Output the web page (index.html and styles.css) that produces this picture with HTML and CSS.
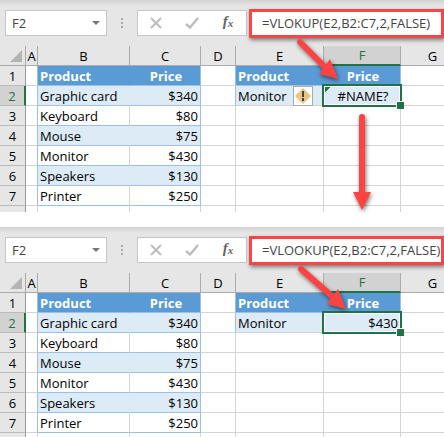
FILE: index.html
```
<!DOCTYPE html>
<html lang="en">
<head>
    <meta charset="UTF-8">
    <title>VLOOKUP #NAME? error</title>
    <link rel="stylesheet" href="styles.css">
</head>
<body>
<!--formula with the wrong name-->
<div class="sheet">
    <div class="toolbar">
        <div class="name_box">
            <input type="text" value="F2" aria-label="Name box">
            <button type="button" aria-label="Open name list"><svg width="8" height="4"><path d="M0 0h8L4 4z" fill="#777"/></svg></button>
        </div>
        <div class="dots"><i></i><i></i><i></i></div>
        <div class="tools">
            <button type="button" aria-label="Cancel"><svg width="12" height="12"><path d="M1 1l10 10M11 1L1 11" stroke="#bdbdbd" stroke-width="2"/></svg></button>
            <button type="button" aria-label="Enter"><svg width="14" height="12"><path d="M1 7l4 3.5L13 1" fill="none" stroke="#bdbdbd" stroke-width="2.4"/></svg></button>
            <button type="button" class="fx" aria-label="Insert function">f<small>x</small></button>
        </div>
        <input type="text" class="formula" value="=VLOKUP(E2,B2:C7,2,FALSE)" aria-label="Formula">
    </div>
    <table class="grid">
        <colgroup>
            <col class="c_num"><col class="c_a"><col class="c_b"><col class="c_c"><col class="c_d"><col class="c_e"><col class="c_f"><col>
        </colgroup>
        <thead>
        <tr><th class="corner"><svg width="12" height="12"><path d="M12 0v12H0z" fill="#b4b4b4"/></svg></th><th>A</th><th>B</th><th>C</th><th>D</th><th>E</th><th class="on">F</th><th>G</th></tr>
        </thead>
        <tbody>
        <tr><th>1</th><td class="edge"></td><td class="head">Product</td><td class="head mid edge">Price</td><td class="edge"></td><td class="head">Product</td><td class="head mid edge">Price</td><td></td></tr>
        <tr><th class="on">2</th><td class="edge"></td><td class="item fill">Graphic card</td><td class="item fill num edge">$340</td><td class="edge"></td><td class="fill">Monitor<button type="button" class="warn" aria-label="Error options"><svg width="16" height="16"><path d="M8 0l8 8-8 8-8-8z" fill="#edc583"/><path d="M8 3v6M8 10v3" stroke="#444" stroke-width="2"/></svg></button></td><td class="fill mid active error">#NAME?</td><td></td></tr>
        <tr><th>3</th><td class="edge"></td><td class="item">Keyboard</td><td class="item num edge">$80</td><td></td><td></td><td></td><td></td></tr>
        <tr><th>4</th><td class="edge"></td><td class="item fill">Mouse</td><td class="item fill num edge">$75</td><td></td><td></td><td></td><td></td></tr>
        <tr><th>5</th><td class="edge"></td><td class="item">Monitor</td><td class="item num edge">$430</td><td></td><td></td><td></td><td></td></tr>
        <tr><th>6</th><td class="edge"></td><td class="item fill">Speakers</td><td class="item fill num edge">$130</td><td></td><td></td><td></td><td></td></tr>
        <tr><th>7</th><td class="edge"></td><td class="item">Printer</td><td class="item num edge">$250</td><td></td><td></td><td></td><td></td></tr>
        <tr class="rest"><th></th><td></td><td></td><td></td><td></td><td></td><td></td><td></td></tr>
        </tbody>
    </table>
</div>

<!--corrected formula-->
<div class="sheet">
    <div class="toolbar">
        <div class="name_box">
            <input type="text" value="F2" aria-label="Name box">
            <button type="button" aria-label="Open name list"><svg width="8" height="4"><path d="M0 0h8L4 4z" fill="#777"/></svg></button>
        </div>
        <div class="dots"><i></i><i></i><i></i></div>
        <div class="tools">
            <button type="button" aria-label="Cancel"><svg width="12" height="12"><path d="M1 1l10 10M11 1L1 11" stroke="#bdbdbd" stroke-width="2"/></svg></button>
            <button type="button" aria-label="Enter"><svg width="14" height="12"><path d="M1 7l4 3.5L13 1" fill="none" stroke="#bdbdbd" stroke-width="2.4"/></svg></button>
            <button type="button" class="fx" aria-label="Insert function">f<small>x</small></button>
        </div>
        <input type="text" class="formula" value="=VLOOKUP(E2,B2:C7,2,FALSE)" aria-label="Formula">
    </div>
    <table class="grid">
        <colgroup>
            <col class="c_num"><col class="c_a"><col class="c_b"><col class="c_c"><col class="c_d"><col class="c_e"><col class="c_f"><col>
        </colgroup>
        <thead>
        <tr><th class="corner"><svg width="12" height="12"><path d="M12 0v12H0z" fill="#b4b4b4"/></svg></th><th>A</th><th>B</th><th>C</th><th>D</th><th>E</th><th class="on">F</th><th>G</th></tr>
        </thead>
        <tbody>
        <tr><th>1</th><td class="edge"></td><td class="head">Product</td><td class="head mid edge">Price</td><td class="edge"></td><td class="head">Product</td><td class="head mid edge">Price</td><td></td></tr>
        <tr><th class="on">2</th><td class="edge"></td><td class="item fill">Graphic card</td><td class="item fill num edge">$340</td><td class="edge"></td><td class="fill">Monitor</td><td class="fill num active">$430</td><td></td></tr>
        <tr><th>3</th><td class="edge"></td><td class="item">Keyboard</td><td class="item num edge">$80</td><td></td><td></td><td></td><td></td></tr>
        <tr><th>4</th><td class="edge"></td><td class="item fill">Mouse</td><td class="item fill num edge">$75</td><td></td><td></td><td></td><td></td></tr>
        <tr><th>5</th><td class="edge"></td><td class="item">Monitor</td><td class="item num edge">$430</td><td></td><td></td><td></td><td></td></tr>
        <tr><th>6</th><td class="edge"></td><td class="item fill">Speakers</td><td class="item fill num edge">$130</td><td></td><td></td><td></td><td></td></tr>
        <tr><th>7</th><td class="edge"></td><td class="item">Printer</td><td class="item num edge">$250</td><td></td><td></td><td></td><td></td></tr>
        <tr class="rest"><th></th><td></td><td></td><td></td><td></td><td></td><td></td><td></td></tr>
        </tbody>
    </table>
</div>

<!--arrows over both sheets-->
<svg class="arrows" width="444" height="437">
    <g stroke="#ff4343" stroke-width="6" stroke-linecap="round" fill="#ff4343">
        <path d="M300 42L326 68"/>
        <path d="M362 117V194"/>
        <path d="M301 269L334 298"/>
        <g stroke="none">
            <path d="M338 79L330 59L319 74z"/>
            <path d="M362 210L353 192H371z"/>
            <path d="M346 309L338 289L327 304z"/>
        </g>
    </g>
</svg>
</body>
</html>
```
FILE: styles.css
```
*{
    margin: 0;
    padding: 0;
    box-sizing: border-box;
}
body{
    position: relative;
    background: white;
    color: #000;
    font-family: "Open Sans", "Noto Sans", sans-serif;
    font-size: 13px;
    line-height: 18px;
    overflow: hidden;
}
input,button{
    font: inherit;
    border: 0;
    background: none;
    color: #444;
    min-width: 0;
}
.sheet{
    overflow: hidden;
}
.sheet + .sheet{
    margin-top: 15px;
}

/*formula bar*/
.toolbar{
    display: flex;
    align-items: center;
    height: 46px;
    padding-left: 5px;
    background: linear-gradient(#d2d2d2, #e6e6e6 6px);
}
.name_box,.tools{
    display: flex;
    align-items: center;
    height: 26px;
    border: 1px solid #c6c6c6;
    background: white;
}
.name_box{
    width: 102px;
}
.name_box input{
    flex: 1;
    padding-left: 6px;
}
.name_box button{
    display: flex;
    padding: 6px;
}
.dots{
    display: grid;
    gap: 2px;
    margin: 0 14px;
}
.dots i{
    width: 2px;
    height: 2px;
    background: #aaa;
}
.tools{
    width: 110px;
}
.tools button{
    flex: 1;
    display: flex;
    justify-content: center;
}
.tools .fx{
    font: italic bold 15px/16px "Liberation Serif", serif;
    color: #666;
}
.fx small{
    font-size: 11px;
    line-height: 20px;
}
.formula{
    flex: 1;
    height: 29px;
    margin: 0 0 0 2px;
    padding-left: 10px;
    border: 3px solid #f94545;
    background: white;
    box-shadow: 1px 2px 4px #777;
}

/*cells*/
.grid{
    width: 100%;
    min-width: 465px;
    table-layout: fixed;
    border-spacing: 0;
}
.c_num{
    width: 26px;
}
.c_a{
    width: 12px;
}
.c_b{
    width: 92px;
}
.c_c{
    width: 71px;
}
.c_d{
    width: 35px;
}
.c_e{
    width: 88px;
}
.c_f{
    width: 77px;
}
tr{
    height: 20px;
}
th,td{
    height: 20px;
    line-height: 18px;
    border-right: 1px solid #d4d4d4;
    border-bottom: 1px solid #d4d4d4;
    white-space: nowrap;
}
th{
    font-weight: normal;
    text-align: center;
    background: #e6e6e6;
    border-color: #ababab;
}
tbody th{
    border-right-color: #999;
    border-bottom-color: #bbb;
}
.corner svg{
    display: block;
    margin-left: 10px;
}
th.on{
    background: #d2d2d2;
    color: #217346;
}
thead .on{
    border-bottom: 2px solid #217346;
}
tbody .on{
    border-right: 2px solid #217346;
}
td{
    padding-left: 2px;
}
.edge{
    border-right-color: #9bc2e6;
}
.head{
    background: #5b9bd5;
    color: white;
    font-weight: bold;
    border-bottom-color: #9bc2e6;
}
.head:not(.edge){
    border-right-color: #5b9bd5;
}
.item{
    border-bottom-color: #9bc2e6;
}
.fill{
    position: relative;
    background: #ddebf7;
}
.fill:not(.edge){
    border-right-color: #ddebf7;
}
.mid{
    text-align: center;
}
.num{
    text-align: right;
    padding-right: 2px;
}
/*selection frame and its fill handle*/
.active::before{
    content: "";
    position: absolute;
    inset: -2px;
    border: 2px solid #217346;
    box-shadow: inset 0 0 0 1px white;
}
.active::after{
    content: "";
    position: absolute;
    right: -4px;
    bottom: -4px;
    width: 7px;
    height: 7px;
    border: 1px solid white;
    border-right: 0;
    border-bottom: 0;
    background: #217346;
}
.error{
    background: linear-gradient(135deg, #217346 5px, #ddebf7 5px);
}
.warn{
    position: absolute;
    right: 10px;
    top: 0;
    display: flex;
    padding: 1px;
    border: 1px solid #ababab;
    background: white;
}
.rest,.rest th,.rest td{
    height: 6px;
    border-bottom: 0;
}
.arrows{
    position: absolute;
    left: 0;
    top: 0;
    filter: drop-shadow(1px 2px 2px #0008);
}
```
